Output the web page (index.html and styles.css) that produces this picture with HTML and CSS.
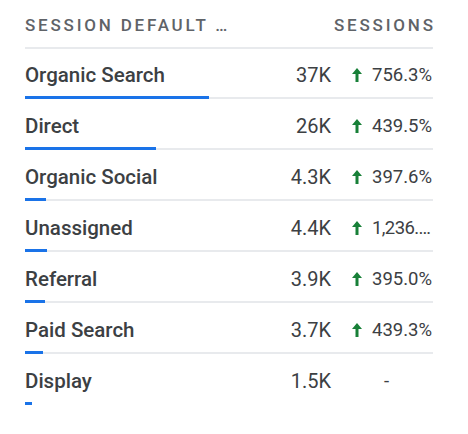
FILE: index.html
```html
<!DOCTYPE html>
<html>
<head>
<meta charset="utf-8">
<link rel="stylesheet" href="styles.css">
</head>
<body>
<div class="table">
  <div class="head">
    <span class="head-label">SESSION DEFAULT …</span>
    <span class="head-metric">SESSIONS</span>
  </div>
  <div class="row">
    <div class="cells"><span class="label">Organic Search</span><span class="num">37K</span><span class="chg"><svg class="arrow" viewBox="0 0 10 14"><path d="M5 0 L10 6 L6.5 6 L6.5 14 L3.5 14 L3.5 6 L0 6 Z"/></svg><span class="pct">756.3%</span></span></div>
    <div class="track"><div class="bar" style="width:45.1%"></div></div>
  </div>
  <div class="row">
    <div class="cells"><span class="label">Direct</span><span class="num">26K</span><span class="chg"><svg class="arrow" viewBox="0 0 10 14"><path d="M5 0 L10 6 L6.5 6 L6.5 14 L3.5 14 L3.5 6 L0 6 Z"/></svg><span class="pct">439.5%</span></span></div>
    <div class="track"><div class="bar" style="width:32.1%"></div></div>
  </div>
  <div class="row">
    <div class="cells"><span class="label">Organic Social</span><span class="num">4.3K</span><span class="chg"><svg class="arrow" viewBox="0 0 10 14"><path d="M5 0 L10 6 L6.5 6 L6.5 14 L3.5 14 L3.5 6 L0 6 Z"/></svg><span class="pct">397.6%</span></span></div>
    <div class="track"><div class="bar" style="width:5.2%"></div></div>
  </div>
  <div class="row">
    <div class="cells"><span class="label">Unassigned</span><span class="num">4.4K</span><span class="chg"><svg class="arrow" viewBox="0 0 10 14"><path d="M5 0 L10 6 L6.5 6 L6.5 14 L3.5 14 L3.5 6 L0 6 Z"/></svg><span class="pct pct-cut">1,236.…</span></span></div>
    <div class="track"><div class="bar" style="width:5.4%"></div></div>
  </div>
  <div class="row">
    <div class="cells"><span class="label">Referral</span><span class="num">3.9K</span><span class="chg"><svg class="arrow" viewBox="0 0 10 14"><path d="M5 0 L10 6 L6.5 6 L6.5 14 L3.5 14 L3.5 6 L0 6 Z"/></svg><span class="pct">395.0%</span></span></div>
    <div class="track"><div class="bar" style="width:4.8%"></div></div>
  </div>
  <div class="row">
    <div class="cells"><span class="label">Paid Search</span><span class="num">3.7K</span><span class="chg"><svg class="arrow" viewBox="0 0 10 14"><path d="M5 0 L10 6 L6.5 6 L6.5 14 L3.5 14 L3.5 6 L0 6 Z"/></svg><span class="pct">439.3%</span></span></div>
    <div class="track"><div class="bar" style="width:4.5%"></div></div>
  </div>
  <div class="row last">
    <div class="cells"><span class="label">Display</span><span class="num">1.5K</span><span class="chg"><span class="dash">-</span></span></div>
    <div class="track"><div class="bar" style="width:1.8%"></div></div>
  </div>
</div>
</body>
</html>
```
FILE: styles.css
```css
html, body {
  margin: 0;
  padding: 0;
  background: #ffffff;
}
body {
  font-family: Roboto, "Noto Sans", sans-serif;
  color: #3c4043;
}
.table {
  width: 408px;
  margin-left: 25px;
}
.head {
  display: flex;
  justify-content: space-between;
  align-items: center;
  height: 49px;
  border-bottom: 2px solid #e8eaed;
  box-sizing: border-box;
  padding-top: 2px;
  color: #5f6368;
  font-size: 17px;
  font-weight: 500;
  letter-spacing: 2.8px;
}
.head-metric {
  margin-right: -2.8px;
}
.row {
  display: flex;
  flex-direction: column;
  height: 51px;
  padding-top: 14px;
  box-sizing: border-box;
}
.cells {
  display: flex;
  align-items: center;
  height: 24px;
  font-size: 20px;
}
.label {
  flex: 1;
  font-size: 20.5px;
  font-weight: 500;
  color: #3c4043;
}
.num {
  font-weight: 400;
  text-align: right;
}
.chg {
  width: 81px;
  margin-left: 21px;
  display: flex;
  align-items: center;
  font-size: 18.5px;
}
.arrow {
  width: 10px;
  height: 14px;
  fill: #188038;
  flex: none;
  margin-top: -1px;
}
.pct {
  flex: 1;
  margin-left: 10px;
  white-space: nowrap;
  min-width: 0;
}
.pct-cut {
  letter-spacing: -0.6px;
}
.dash {
  margin-left: 32px;
}
.track {
  margin-top: auto;
  height: 2px;
  background: #e8eaed;
  margin-bottom: 1px;
}
.row.last .track {
  background: transparent;
}
.bar {
  height: 3px;
  margin-top: -1px;
  background: #1a73e8;
}
```
